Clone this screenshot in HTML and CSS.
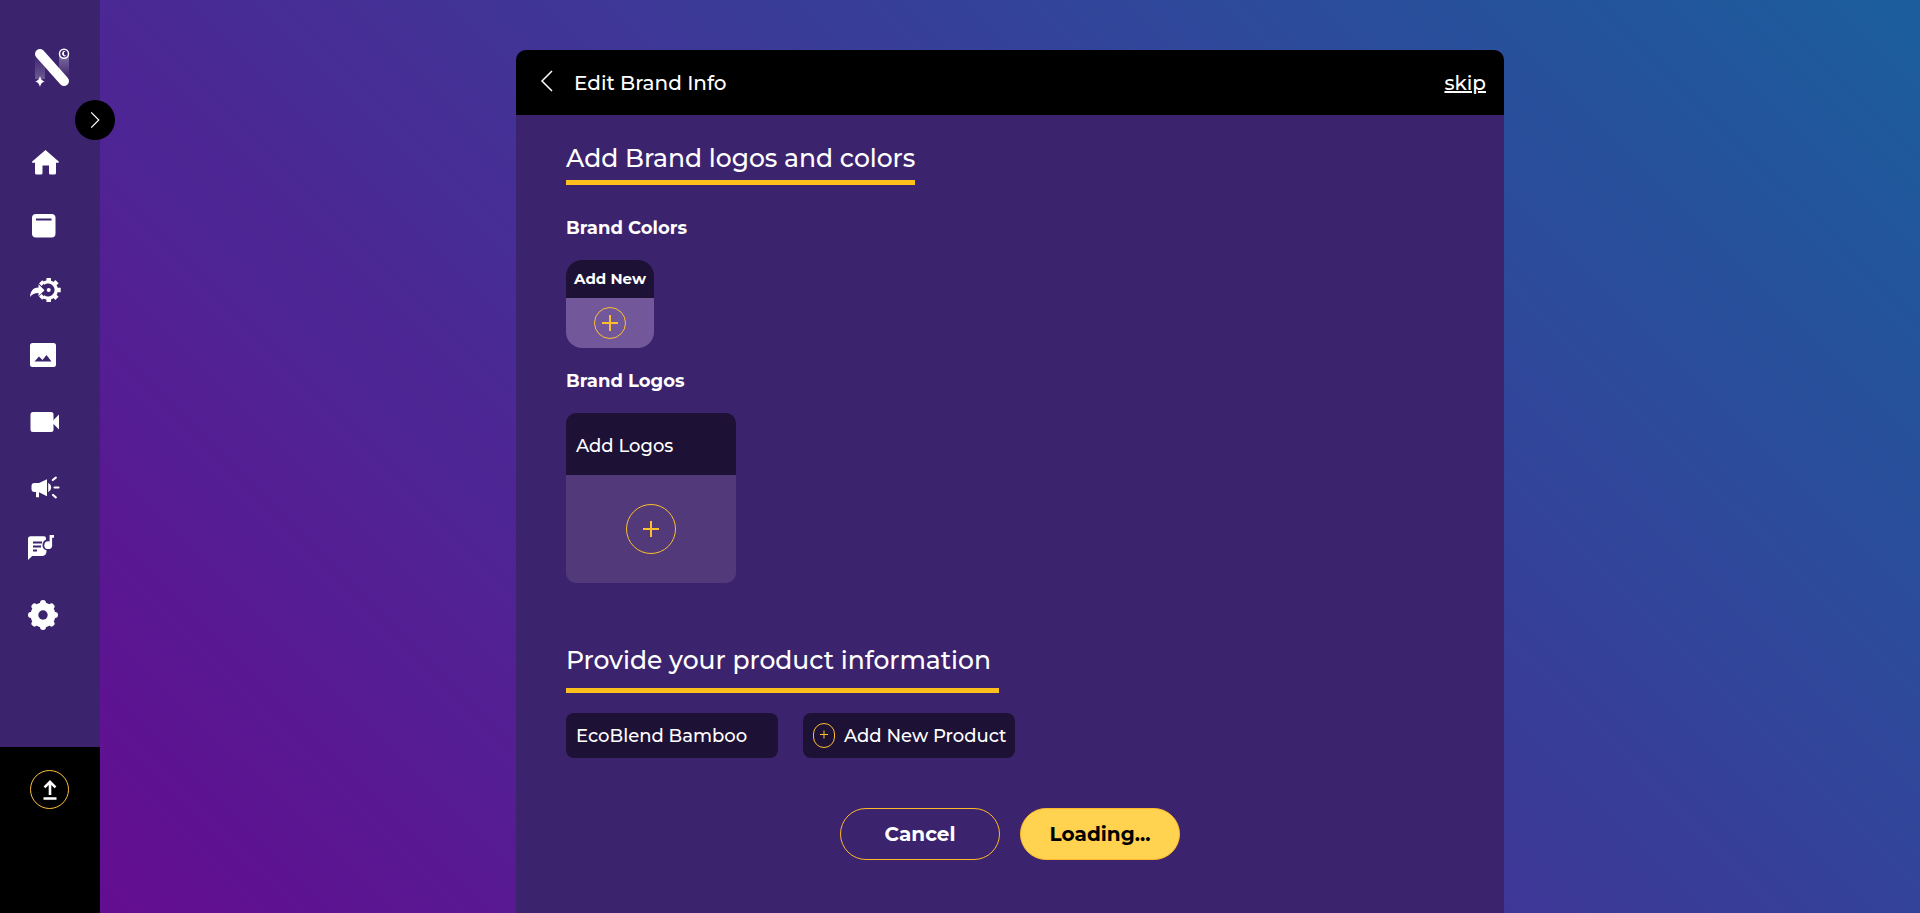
FILE: index.html
```html
<!DOCTYPE html>
<html lang="en">
<head>
<meta charset="utf-8">
<meta name="viewport" content="width=device-width, initial-scale=1">
<title>Edit Brand Info</title>
<link rel="stylesheet" href="styles.css">
</head>
<body>
<div class="app">
  <aside class="sidebar">
    <div class="sidebar-top">
      <a class="logo" href="#" aria-label="Home page">
        <svg width="40" height="44" viewBox="32 46 40 44">
          <defs>
            <linearGradient id="trail-up" x1="0" y1="0" x2="0" y2="1"><stop offset="0" stop-color="#fff" stop-opacity="0"/><stop offset="1" stop-color="#fff" stop-opacity=".25"/></linearGradient>
            <linearGradient id="trail-down" x1="0" y1="0" x2="0" y2="1"><stop offset="0" stop-color="#fff" stop-opacity=".35"/><stop offset="1" stop-color="#fff" stop-opacity="0"/></linearGradient>
          </defs>
          <path fill="url(#trail-up)" d="M35 55h10v24H35z"/>
          <path fill="url(#trail-down)" d="M59 55h10v23H59z"/>
          <path d="M40 54l24 27" stroke="#fff" stroke-width="10" stroke-linecap="round"/>
          <circle cx="64" cy="53.800" r="4.500" fill="#3c236e" stroke="#fff" stroke-width="1.500"/>
          <path fill="#fff" d="M65.500 51.300a2.600 2.600 0 1 0 1 4.200 1.800 1.800 0 0 1-1-4.200z"/>
          <path fill="#fff" d="M40 76c1 3.700 1.800 4.500 5 5.500-3.200 1-4 1.800-5 5.500-1-3.700-1.800-4.500-5-5.500 3.200-1 4-1.800 5-5.500z"/>
        </svg>
      </a>
      <button class="toggle" type="button" aria-label="Expand menu">
        <svg width="20" height="20" viewBox="0 0 20 20" fill="none" stroke="#fff" stroke-width="1.200"><path d="M6.200 2.300l7.600 7.700-7.600 7.700"/></svg>
      </button>
      <nav class="nav" aria-label="Main">
        <a href="#" aria-label="Home"><svg viewBox="25 142 40 40"><path d="M45.500 150l13.500 11.800-.5 1H56v10.200q0 1.500-1.500 1.500h-4q-1.500 0-1.500-1.500v-7.500h-6.500v7.500q0 1.500-1.500 1.500h-4.500q-1.500 0-1.500-1.500v-10.200h-2.700l-.4-1z"/></svg></a>
        <a href="#" aria-label="Library"><svg viewBox="25 207 40 40"><rect x="32" y="214" width="23.500" height="23.500" rx="4"/><path class="cut" d="M36 219.500h15.500"/></svg></a>
        <a href="#" aria-label="Automation"><svg viewBox="25 272 40 40">
          <g fill="none" stroke="#fff"><path stroke-width="3.300" d="M43.300 283.300a8.200 8.200 0 1 1 0 13.400"/><path stroke-width="4.500" d="M48.700 282v-4M48.700 298v4M56.700 290h4M54.200 284.400l2.800-2.800M54.200 295.600l2.800 2.800M43.200 284.400l-2.600-2.600M43.200 295.600l-2.600 2.600"/></g>
          <circle cx="48.700" cy="290" r="2"/><path d="M30 297c.5-6.500 3.500-9.500 8.500-9.500v-3.300l6 6-6 6v-3.300c-4 0-6.500 1-8.500 4.100z"/></svg></a>
        <a href="#" aria-label="Images"><svg viewBox="25 337 40 40"><path fill-rule="evenodd" d="M32.500 343h21q2.500 0 2.500 2.500v19q0 2.500-2.500 2.500h-21q-2.500 0-2.500-2.500v-19q0-2.500 2.500-2.500zM34.500 361.500h17l-5-6.500-4 5-3.500-3.500z"/></svg></a>
        <a href="#" aria-label="Videos"><svg viewBox="25 402 40 40"><rect x="30.500" y="412" width="23" height="20" rx="2.500"/><path d="M53 420.500l6-6v15l-6-6z"/></svg></a>
        <a href="#" aria-label="Campaigns"><svg viewBox="25 467 40 40"><path d="M47 479.200v17l-8-4v5h-3v-5.200h-1.500q-3 0-3-3v-3q0-3 3-3H39zM48.200 482.700q3 1.800 3 4.800t-3 4.800z"/><path fill="none" stroke="#fff" stroke-width="2.200" stroke-linecap="round" d="M52.800 480l3-2.300M54.500 487.500h4M53 495l2.800 2.300"/></svg></a>
        <a href="#" aria-label="Scripts and music"><svg viewBox="25 532 40 40"><path d="M30.500 536.300H44q2 0 2 2v1.200a6 6 0 0 0-2 9.500q1 1 2.500 1.200v1.300q-.3 4-4 4.500H32.200L28 560v-21.200q0-2.500 2.500-2.500z"/><path class="cut" d="M33 542.500h9M33 546.500h8M33 550.500h4"/><circle cx="48.200" cy="545.200" r="3.900"/><path d="M49.600 535H54v2.800h-1.900v8h-2.500z"/></svg></a>
        <a href="#" aria-label="Settings"><svg viewBox="25 597 40 40"><circle cx="43" cy="615" r="8.500" fill="none" stroke="#fff" stroke-width="8"/><path fill="none" stroke="#fff" stroke-width="6" stroke-linecap="round" d="M43 603v24M31 615h24M34.500 606.500l17 17M34.500 623.500l17-17"/><circle cx="43" cy="615" r="4.700" fill="#3c236e"/></svg></a>
      </nav>
    </div>
    <div class="sidebar-bottom">
      <button class="upload" type="button" aria-label="Upload">
        <svg width="20" height="24" viewBox="0 0 20 24" fill="none" stroke="#fff" stroke-width="2.600"><path d="M10 17V4M4.500 9.300L10 3.800l5.500 5.500M3.500 20.500h13"/></svg>
      </button>
    </div>
  </aside>

  <main class="content">
    <div class="panel">
      <header class="panel-header">
        <button class="back" type="button" aria-label="Back"><svg width="14" height="24" viewBox="0 0 14 24" fill="none" stroke="#fff" stroke-width="1.500"><path d="M12 2L2 12l10 10"/></svg></button>
        <h1>Edit Brand Info</h1>
        <a class="skip" href="#">skip</a>
      </header>
      <div class="panel-body">
        <section class="brand">
          <h2>Add Brand logos and colors</h2>
          <h3>Brand Colors</h3>
          <button class="card card-color" type="button">
            <span class="card-title">Add New</span>
            <span class="card-area"><svg width="32" height="32" viewBox="0 0 32 32"><circle cx="16" cy="16" r="15.500"/><path d="M16 8v16M8 16h16"/></svg></span>
          </button>
          <h3>Brand Logos</h3>
          <button class="card card-logo" type="button">
            <span class="card-title">Add Logos</span>
            <span class="card-area"><svg width="50" height="50" viewBox="0 0 50 50"><circle cx="25" cy="25" r="24.500"/><path d="M25 17v16M17 25h16"/></svg></span>
          </button>
        </section>
        <section class="products">
          <h2>Provide your product information</h2>
          <div class="tiles">
            <button class="tile" type="button">EcoBlend Bamboo</button>
            <button class="tile tile-add" type="button"><svg width="22" height="25" viewBox="0 0 22 25"><rect x=".5" y=".5" width="21" height="24" rx="10.500"/><path d="M11 7.500v8M7 11.500h8"/></svg>Add New Product</button>
          </div>
        </section>
        <div class="actions">
          <button class="action" type="button">Cancel</button>
          <button class="action action-primary" type="button">Loading...</button>
        </div>
      </div>
    </div>
  </main>
</div>
</body>
</html>
```

FILE: styles.css
```css
* {
  box-sizing: border-box;
}

body {
  margin: 0;
  color: #fff;
  font-family: Montserrat, Inter, sans-serif;
  font-weight: 500;
}

button {
  padding: 0;
  border: 0;
  background: none;
  color: inherit;
  font: inherit;
  cursor: pointer;
}

svg {
  display: block;
  flex: none;
}

h1, h2, h3 {
  margin: 0;
  font-weight: 500;
}

.app {
  display: flex;
  min-height: 100vh;
  background: linear-gradient(45deg, #660a90, #1b5e9d);
}

/* Sidebar */
.sidebar {
  display: flex;
  flex-direction: column;
  flex: none;
  width: 100px;
  background: #000;
}

.sidebar-top {
  position: relative;
  padding: 46px 0 110px;
  background: #3c236e;
}

.logo {
  display: block;
  width: 40px;
  margin: 0 0 52px 32px;
}

.toggle {
  position: absolute;
  top: 100px;
  right: -15px;
  display: grid;
  place-items: center;
  width: 40px;
  height: 40px;
  border-radius: 50%;
  background: #000;
}

.nav {
  display: grid;
  gap: 25px;
  padding-left: 25px;
}

.nav a {
  width: 40px;
  height: 40px;
}

.nav svg {
  width: 40px;
  height: 40px;
  fill: #fff;
}

.nav .cut {
  fill: none;
  stroke: #3c236e;
  stroke-width: 2;
}

.sidebar-bottom {
  padding: 23px 30px;
}

.upload {
  display: grid;
  place-items: center;
  width: 39px;
  height: 39px;
  border: 1px solid #fdc13c;
  border-radius: 50%;
}

/* Panel */
.content {
  display: flex;
  flex: 1;
  justify-content: center;
  padding-top: 50px;
}

.panel {
  width: 100%;
  max-width: 988px;
  border-radius: 10px 10px 0 0;
  background: #3c236e;
  overflow: hidden;
}

.panel-header {
  display: flex;
  align-items: center;
  gap: 20px;
  padding: 17px 18px 15px 24px;
  background: #000;
  font-size: 20px;
  line-height: 33px;
}

.panel-header h1 {
  font-size: inherit;
}

.back {
  padding-bottom: 6px;
}

.skip {
  margin-left: auto;
  color: #fff;
}

.panel-body {
  padding: 28px 50px 50px;
}

h2 {
  width: fit-content;
  padding-bottom: 7px;
  border-bottom: 5px solid #ffbf1c;
  font-size: 25px;
  line-height: 30px;
}

h3 {
  font-size: 18px;
  font-weight: 700;
  line-height: 25px;
}

.brand h2 {
  margin-bottom: 31px;
}

.card {
  display: flex;
  flex-direction: column;
  margin: 19px 0 21px;
  overflow: hidden;
}

.card-title {
  display: flex;
  align-items: center;
  align-self: stretch;
  background: #1e1136;
}

.card-area {
  display: grid;
  flex: 1;
  place-items: center;
  align-self: stretch;
}

.card svg,
.tile svg {
  fill: none;
  stroke: #fdc02c;
}

.card path {
  stroke-width: 2;
}

.card-color {
  width: 88px;
  height: 88px;
  border-radius: 16px;
  font-size: 15px;
  font-weight: 700;
}

.card-color .card-title {
  justify-content: center;
  height: 38px;
  padding-bottom: 2px;
}

.card-color .card-area {
  background: #72579b;
}

.card-logo {
  width: 170px;
  height: 170px;
  margin-bottom: 0;
  border-radius: 10px;
  font-size: 18px;
}

.card-logo .card-title {
  height: 62px;
  padding: 4px 10px 0;
}

.card-logo .card-area {
  background: #523979;
}

.products {
  padding-top: 62px;
}

.products h2 {
  padding: 0 8px 13px 0;
}

.tiles {
  display: flex;
  flex-wrap: wrap;
  gap: 25px;
  margin-top: 20px;
}

.tile {
  display: flex;
  align-items: center;
  gap: 9px;
  min-width: 212px;
  height: 45px;
  padding: 0 8px 0 10px;
  border-radius: 8px;
  background: #1e1136;
  font-size: 18px;
}

.tile-add {
  min-width: 210px;
}

.actions {
  display: flex;
  justify-content: center;
  gap: 20px;
  margin-top: 50px;
}

.action {
  width: 160px;
  height: 52px;
  border: 1px solid #fdb92a;
  border-radius: 26px;
  font-size: 20px;
  font-weight: 700;
}

.action-primary {
  background: #ffd34f;
  color: #000;
}
```
